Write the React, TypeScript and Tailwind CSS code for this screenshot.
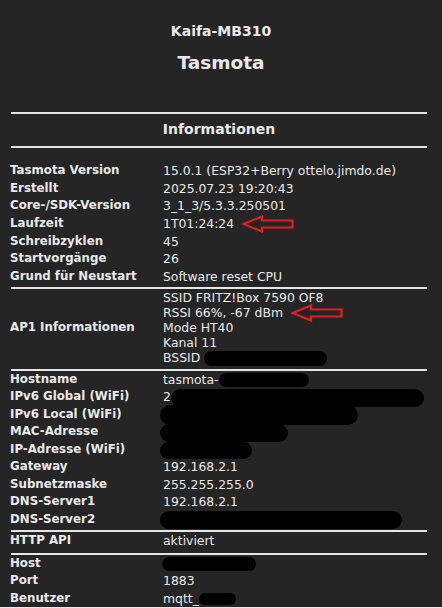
import React from 'react'

type Row = {
  label: string
  value?: React.ReactNode
}

// red hand-drawn-ish arrow pointing left
function Arrow({ className }: { className: string }) {
  return (
    <svg width="52" height="18" viewBox="0 0 52 18" className={'inline-block align-middle ' + className} fill="none">
      <path
        d="M1.5 9 L20 1.5 L20 5.5 L50.5 5.5 L50.5 12.5 L20 12.5 L20 16.5 Z"
        stroke="#e41e1e"
        strokeWidth="2.2"
      />
    </svg>
  )
}

// black marker redaction
function Blob({ className }: { className: string }) {
  return <span className={'inline-block rounded-full bg-black align-middle ' + className} />
}

function Line({ top = 'mt-[2px]' }: { top?: string }) {
  return <div className={top + ' ml-[1px] h-[2px] w-[416px] bg-[#e6e6e6]'} />
}

function TableRow({ label, value }: Row) {
  return (
    <div className="flex py-[1.25px] leading-[15px]">
      <div className="w-[153px] shrink-0 text-[11.8px] font-bold">{label}</div>
      <div className="flex-1 whitespace-nowrap">{value}</div>
    </div>
  )
}

export default function App() {
  const first: Row[] = [
    { label: 'Tasmota Version', value: '15.0.1 (ESP32+Berry ottelo.jimdo.de)' },
    { label: 'Erstellt', value: '2025.07.23 19:20:43' },
    { label: 'Core-/SDK-Version', value: '3_1_3/5.3.3.250501' },
    {
      label: 'Laufzeit',
      value: (
        <>
          1T01:24:24
          <Arrow className="-my-[2px] ml-[8px]" />
        </>
      ),
    },
    { label: 'Schreibzyklen', value: '45' },
    { label: 'Startvorgänge', value: '26' },
    { label: 'Grund für Neustart', value: 'Software reset CPU' },
  ]

  const net: Row[] = [
    {
      label: 'Hostname',
      value: (
        <>
          tasmota-
          <Blob className="-my-[1px] ml-[1px] h-[14px] w-[90px]" />
        </>
      ),
    },
    {
      label: 'IPv6 Global (WiFi)',
      value: (
        <>
          2
          <Blob className="-my-[3px] ml-[0px] h-[18px] w-[253px]" />
        </>
      ),
    },
    {
      label: 'IPv6 Local (WiFi)',
      value: <Blob className="-my-[4px] -ml-[3px] h-[20px] w-[198px]" />,
    },
    {
      label: 'MAC-Adresse',
      value: <Blob className="-my-[3px] -ml-[3px] h-[18px] w-[128px]" />,
    },
    {
      label: 'IP-Adresse (WiFi)',
      value: <Blob className="-my-[3px] -ml-[3px] h-[17px] w-[92px]" />,
    },
    { label: 'Gateway', value: '192.168.2.1' },
    { label: 'Subnetzmaske', value: '255.255.255.0' },
    { label: 'DNS-Server1', value: '192.168.2.1' },
    {
      label: 'DNS-Server2',
      value: <Blob className="-my-[3px] -ml-[3px] h-[18px] w-[242px]" />,
    },
  ]

  const mqtt: Row[] = [
    {
      label: 'Host',
      value: <Blob className="-my-[1px] -ml-[1px] h-[14px] w-[94px]" />,
    },
    { label: 'Port', value: '1883' },
    {
      label: 'Benutzer',
      value: (
        <>
          mqtt_
          <Blob className="-my-[1px] h-[12px] w-[37px]" />
        </>
      ),
    },
  ]

  return (
    <div
      className="flex h-[608px] w-[442px] flex-col overflow-hidden bg-[#252525] text-[12.4px] text-[#eaeaea]"
      style={{ fontFamily: '"DejaVu Sans", Verdana, sans-serif' }}
    >
      <div className="flex-1">
        <div className="pt-[23px] text-center text-[14px] leading-[17px] font-bold">Kaifa-MB310</div>
        <div className="mt-[12px] text-center text-[18.5px] leading-[22px] font-bold">Tasmota</div>

        <div className="ml-[10px] w-[418px]">
          <Line top="mt-[38px]" />
          <div className="mt-[7px] text-center text-[14px] leading-[17px] font-bold">Informationen</div>
          <Line top="mt-[8px]" />

          <div className="mt-[14px]">
            {first.map((r) => (
              <TableRow key={r.label} {...r} />
            ))}
          </div>
          <Line top="mt-[1.5px]" />

          <div className="flex py-[1.25px] leading-[15px]">
            <div className="flex w-[153px] shrink-0 items-center text-[11.8px] font-bold">AP1 Informationen</div>
            <div className="flex flex-1 flex-col whitespace-nowrap">
              <div>SSID FRITZ!Box 7590 OF8</div>
              <div>
                RSSI 66%, -67 dBm
                <Arrow className="-my-[2px] ml-[8px]" />
              </div>
              <div>Mode HT40</div>
              <div>Kanal 11</div>
              <div>
                BSSID
                <Blob className="-my-[2px] ml-[4px] h-[15px] w-[123px]" />
              </div>
            </div>
          </div>
          <Line />

          {net.map((r) => (
            <TableRow key={r.label} {...r} />
          ))}
          <Line />
          <TableRow label="HTTP API" value="aktiviert" />
          <Line top="mt-[3px]" />
          {mqtt.map((r) => (
            <TableRow key={r.label} {...r} />
          ))}
        </div>
      </div>
      <div className="h-[2px] bg-[#e8e8e8]" />
    </div>
  )
}
